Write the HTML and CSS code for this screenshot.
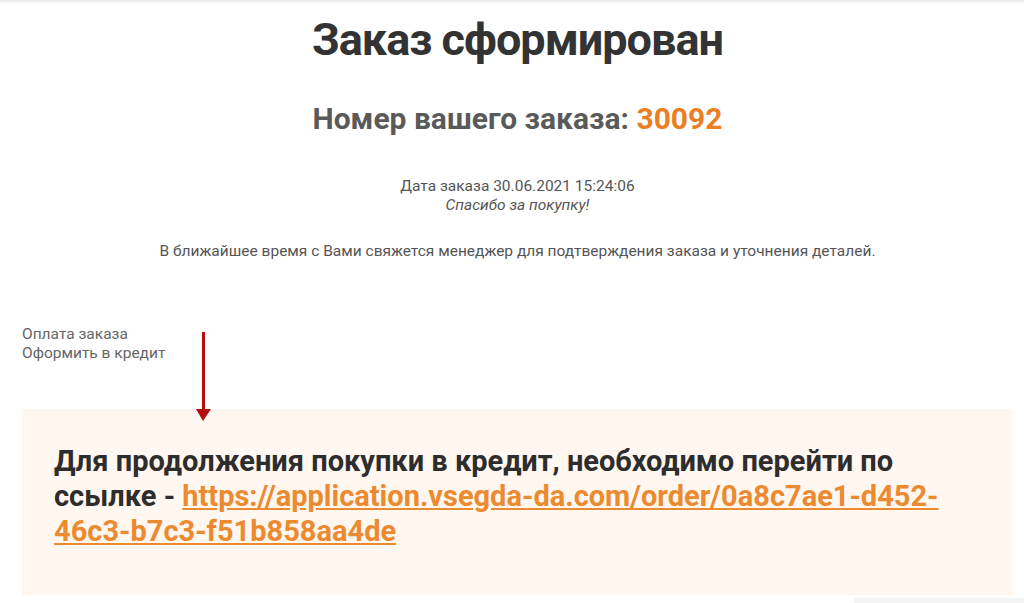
FILE: index.html
```html
<!DOCTYPE html>
<html lang="ru">
<head>
	<meta charset="UTF-8">
	<title>Заказ сформирован</title>
	<link rel="stylesheet" href="styles.css">
</head>
<body>
	<div class="topShadow"></div>
	<div class="page">
		<h1 class="title">Заказ сформирован</h1>
		<h2 class="orderNum">Номер вашего заказа: <span>30092</span></h2>
		<div class="orderInfo">
			<p>Дата заказа 30.06.2021 15:24:06</p>
			<p><i>Спасибо за покупку!</i></p>
		</div>
		<p class="notice">В ближайшее время с Вами свяжется менеджер для подтверждения заказа и уточнения деталей.</p>
		<div class="payment">
			<p>Оплата заказа</p>
			<p>Оформить в кредит</p>
		</div>
		<div class="creditBox">
			<span class="arrow"></span>
			<p>Для продолжения покупки в кредит, необходимо перейти по ссылке - <a href="javascript:;">https://application.vsegda-da.com/order/0a8c7ae1-d452-46c3-b7c3-f51b858aa4de</a></p>
		</div>
	</div>
	<div class="bottomBar"></div>
</body>
</html>
```

FILE: styles.css
```css
body,h1,h2,p{
	margin: 0;padding: 0;
}
body{
	font-family: Roboto, "Noto Sans", sans-serif;
	color: #555;
	background: #fff;
}
.topShadow{
	height: 4px;
	background: linear-gradient(#e6e6e6, #fff);
}
.page{
	padding: 0 11px 0 22px;
}
.title{
	margin-top: 8px;
	text-align: center;
	font-size: 45px;
	line-height: 56px;
	font-weight: 700;
	letter-spacing: -1px;
	color: #333;
}
.orderNum{
	margin-top: 32px;
	text-align: center;
	font-size: 30px;
	line-height: 38px;
	font-weight: 700;
	color: #5a5a5a;
}
.orderNum span{
	color: #ec7f24;
}
.orderInfo{
	margin-top: 39px;
	text-align: center;
	font-size: 15.5px;
	line-height: 19px;
}
.notice{
	margin-top: 26px;
	text-align: center;
	font-size: 15.5px;
	line-height: 20px;
}
.payment{
	margin-top: 64px;
	font-size: 15.5px;
	line-height: 19px;
	color: #666;
}
.creditBox{
	position: relative;
	margin-top: 46px;
	height: 186px;
	padding: 35px 32px 0;
	box-sizing: border-box;
	background: #fff7f0;
}
.creditBox p{
	font-size: 29px;
	line-height: 35px;
	font-weight: 700;
	color: #2d2d2d;
}
.creditBox a{
	color: #ec8a30;
	text-decoration: underline;
}
.arrow{
	position: absolute;
	left: 180px;
	top: -77px;
	width: 3px;
	height: 79px;
	background: #b40d0d;
}
.arrow:after{
	content: '';
	position: absolute;
	left: -6px;
	bottom: -10px;
	border-left: 7px solid transparent;
	border-right: 8px solid transparent;
	border-top: 12px solid #b40d0d;
}
.bottomBar{
	margin: 3px 0 0 auto;
	width: 170px;
	height: 6px;
	background: #f4f4f4;
}
```
